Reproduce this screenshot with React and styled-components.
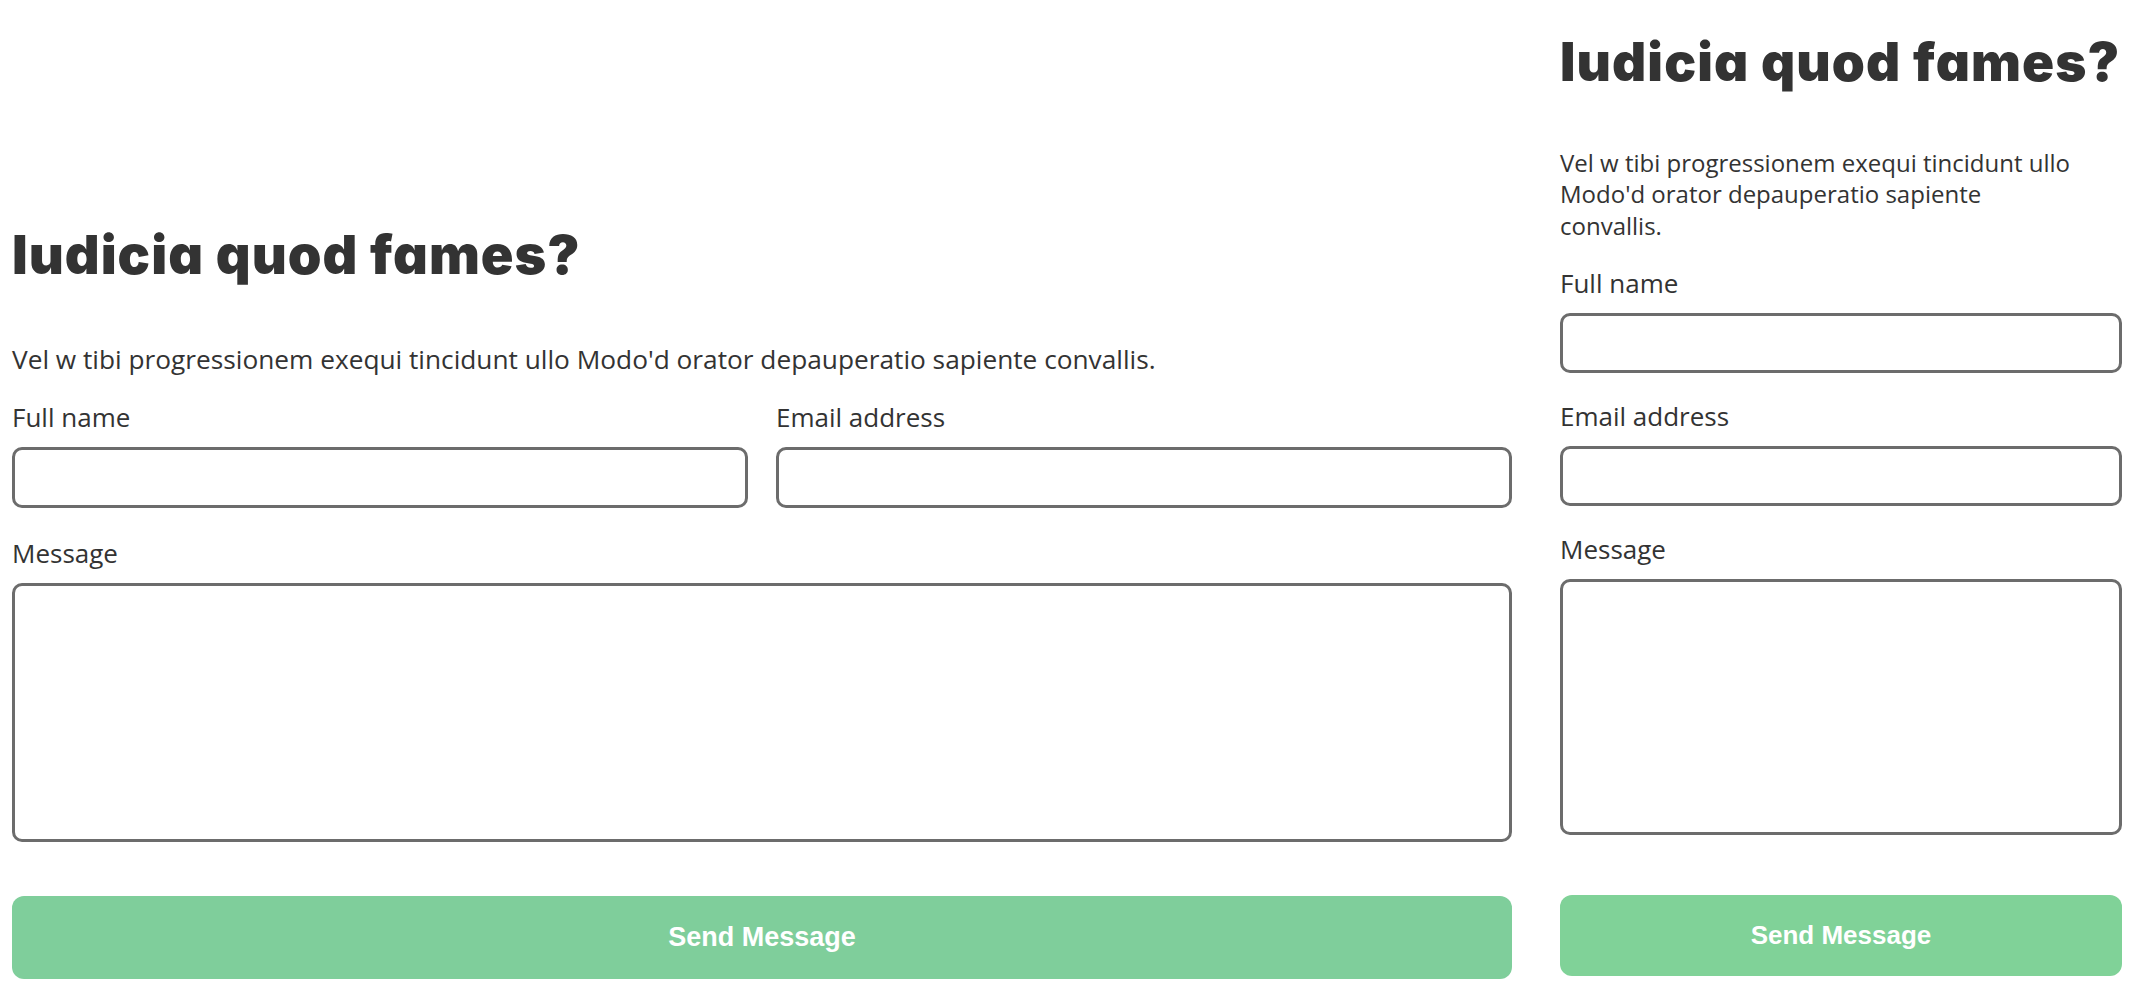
import React from "react";
import styled, { createGlobalStyle } from "styled-components";

const GlobalStyle = createGlobalStyle`
  html, body {
    margin: 0;
    padding: 0;
    background: #ffffff;
  }
  body {
    font-family: "Open Sans", "Noto Sans", sans-serif;
    color: #333333;
  }
  * { box-sizing: border-box; }
`;

const Page = styled.main`
  min-height: 100vh;
  display: grid;
  grid-template-columns: 1500px 562px;
  column-gap: 48px;
  align-items: end;
  padding: 0 24px 17px 12px;
`;

const Section = styled.section`
  display: flex;
  flex-direction: column;
  margin-bottom: ${(p) => (p.$compact ? "3px" : "0")};
`;

const Heading = styled.h2`
  margin: 0 0 ${(p) => (p.$compact ? "52px" : "53px")};
  font-family: "Inter", "Lato", sans-serif;
  font-feature-settings: "cv11" 1;
  font-weight: 900;
  font-size: ${(p) => (p.$compact ? "53px" : "54px")};
  line-height: 1.2;
  letter-spacing: ${(p) => (p.$compact ? "1.1px" : "1px")};
  color: #333333;
`;

const Intro = styled.p`
  margin: 0 0 ${(p) => (p.$compact ? "24px" : "22px")};
  max-width: ${(p) => (p.$compact ? "515px" : "none")};
  font-size: ${(p) => (p.$compact ? "24px" : "26.25px")};
  line-height: ${(p) => (p.$compact ? "31.5px" : "36px")};
  color: #333333;
`;

const Form = styled.form`
  display: flex;
  flex-direction: column;
  gap: ${(p) => (p.$compact ? "25px" : "27px")};
`;

const Row = styled.div`
  display: grid;
  grid-template-columns: ${(p) => (p.$compact ? "1fr" : "1fr 1fr")};
  column-gap: 28px;
  row-gap: 25px;
`;

const Field = styled.label`
  display: flex;
  flex-direction: column;
  gap: 12px;
`;

const LabelText = styled.span`
  font-size: 26px;
  line-height: 36px;
  color: #333333;
`;

const Input = styled.input`
  width: 100%;
  height: ${(p) => (p.$compact ? "60px" : "61px")};
  border: 3px solid #6c6c6c;
  border-radius: 10px;
  background: #ffffff;
  font: inherit;
  padding: 0 14px;
  outline: none;
`;

const TextArea = styled.textarea`
  width: 100%;
  height: ${(p) => (p.$compact ? "256px" : "259px")};
  border: 3px solid #6c6c6c;
  border-radius: 10px;
  background: #ffffff;
  font: inherit;
  padding: 12px 14px;
  resize: none;
  outline: none;
  display: block;
`;

const Button = styled.button`
  margin-top: ${(p) => (p.$compact ? "35px" : "27px")};
  width: 100%;
  height: ${(p) => (p.$compact ? "81px" : "83px")};
  border: none;
  border-radius: 12px;
  background: ${(p) => (p.$compact ? "#80d298" : "#7fce9b")};
  color: #ffffff;
  font-family: "Liberation Sans", Arial, sans-serif;
  font-weight: 700;
  font-size: ${(p) => (p.$compact ? "26px" : "27px")};
  cursor: pointer;
`;

function ContactForm({ compact }) {
  return (
    <Section $compact={compact}>
      <Heading $compact={compact}>Iudicia quod fames?</Heading>
      <Intro $compact={compact}>
        Vel w tibi progressionem exequi tincidunt ullo Modo'd orator depauperatio sapiente convallis.
      </Intro>
      <Form $compact={compact} onSubmit={(e) => e.preventDefault()}>
        <Row $compact={compact}>
          <Field>
            <LabelText>Full name</LabelText>
            <Input $compact={compact} type="text" />
          </Field>
          <Field>
            <LabelText>Email address</LabelText>
            <Input $compact={compact} type="email" />
          </Field>
        </Row>
        <Field>
          <LabelText>Message</LabelText>
          <TextArea $compact={compact} />
        </Field>
        <Button $compact={compact} type="submit">Send Message</Button>
      </Form>
    </Section>
  );
}

export default function App() {
  return (
    <>
      <GlobalStyle />
      <Page>
        <ContactForm />
        <ContactForm compact />
      </Page>
    </>
  );
}
